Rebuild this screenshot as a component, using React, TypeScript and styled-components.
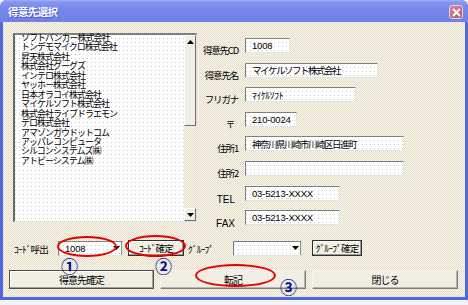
import React from "react";
import styled, { createGlobalStyle } from "styled-components";

const Global = createGlobalStyle`
  html, body { margin: 0; padding: 0; background: #f2f2f2; }
  body { font-family: "Noto Sans CJK JP", "Noto Sans", sans-serif; }
`;

const JP = `"Noto Sans CJK JP", "Noto Sans", sans-serif`;
const LATIN = `"Liberation Sans", "Noto Sans CJK JP", sans-serif`;
const dither = `repeating-conic-gradient(#E4DCC4 0 25%, #FAF8F1 0 50%) 0 0 / 2px 2px`;
const dotted = `
  background-color: #fff;
  background-image: linear-gradient(#fff 3px, transparent 3px), linear-gradient(90deg, #c8c8c8 1px, #fff 1px);
  background-size: 4px 4px;
`;

const Window = styled.div`
  position: relative;
  width: 468px;
  height: 300px;
  box-sizing: border-box;
  display: flex;
  flex-direction: column;
  background: #5366e2;
  border-radius: 7px 7px 0 0;
  overflow: hidden;
`;

const TitleBar = styled.div`
  height: 22px;
  flex: none;
  display: flex;
  align-items: center;
  justify-content: space-between;
  padding: 0 5px 0 8px;
  box-sizing: border-box;
  background: linear-gradient(#a3b0f6 0, #8595ee 2px, #7585e8 45%, #7080e6 100%);
  color: #fff;
`;

const Title = styled.span`
  font-family: ${JP};
  font-size: 10.5px;
  font-weight: bold;
  letter-spacing: -0.6px;
  text-shadow: 1px 1px 0 #4a5ac0;
  margin-top: 1px;
`;

const CloseBox = styled.div`
  width: 14px;
  height: 14px;
  box-sizing: border-box;
  border-radius: 3px;
  border: 1px solid #e8d0e0;
  background: linear-gradient(135deg, #d88898, #b8586c);
  display: flex;
  align-items: center;
  justify-content: center;
  margin-top: 2px;
`;

const Client = styled.div`
  flex: 1;
  margin: 0 3px 3px 3px;
  background: ${dither};
  display: flex;
  flex-direction: column;
  padding: 11px 0 0 0;
`;

const TopSection = styled.div`
  display: flex;
  padding-left: 10px;
`;

const ListBox = styled.div`
  width: 184px;
  height: 189px;
  box-sizing: border-box;
  border-top: 2px solid #808080;
  border-left: 2px solid #6a6a6a;
  border-right: 1px solid #e0e0e0;
  border-bottom: 1px solid #e0e0e0;
  display: flex;
  ${dotted}
`;

const ListItems = styled.div`
  flex: 1;
  padding: 0 0 0 6px;
  margin-top: -2px;
  font-family: ${JP};
  font-size: 9px;
  line-height: 9.46px;
  letter-spacing: -1px;
  color: #000;
  white-space: nowrap;
`;

const ListItem = styled.div``;

const ScrollBar = styled.div`
  width: 12px;
  display: flex;
  flex-direction: column;
  background: ${dither};
`;

const ScrollButton = styled.div<{ $h: number; $bottom?: boolean }>`
  height: ${(p) => p.$h}px;
  box-sizing: border-box;
  background: #f1eee4;
  border: 1px solid;
  border-color: #fff #707070 #707070 #fff;
  display: flex;
  justify-content: center;
  align-items: ${(p) => (p.$bottom ? "center" : "flex-start")};
  padding-top: ${(p) => (p.$bottom ? 0 : 4)}px;
`;

const ScrollGap = styled.div`
  flex: 1;
`;

const Form = styled.div`
  display: grid;
  grid-template-columns: 40px auto;
  grid-template-rows: repeat(8, 15px);
  column-gap: 7px;
  row-gap: 9.6px;
  padding-top: 5px;
  margin-left: 1px;
  align-content: start;
`;

const Label = styled.div<{ $mr?: number }>`
  font-family: ${JP};
  font-size: 9.5px;
  letter-spacing: -1.2px;
  text-align: right;
  align-self: end;
  margin-bottom: -4px;
  margin-right: ${(p) => p.$mr ?? 0}px;
  white-space: nowrap;
  color: #000;
`;

const LatinLabel = styled(Label)`
  font-family: ${LATIN};
  font-size: 10px;
  letter-spacing: 0;
  margin-right: 3px;
`;

const Field = styled.div<{ $w: number; $latin?: boolean; $half?: boolean }>`
  width: ${(p) => p.$w}px;
  height: 15px;
  box-sizing: border-box;
  border: 1px solid;
  border-color: #7f7f7f #e4e4e4 #e4e4e4 #7f7f7f;
  ${dotted}
  padding-left: 6px;
  display: flex;
  align-items: center;
  font-family: ${(p) => (p.$latin ? LATIN : JP)};
  font-size: 9.5px;
  letter-spacing: ${(p) => (p.$latin ? "-0.2px" : p.$half ? "-0.3px" : "-1.5px")};
  white-space: nowrap;
  overflow: hidden;
  color: #000;
`;

const ControlRow = styled.div`
  display: flex;
  align-items: center;
  margin-top: 15px;
  padding-left: 11px;
  height: 16px;
`;

const RowLabel = styled.div<{ $w: number; $pad?: number }>`
  width: ${(p) => p.$w}px;
  padding-left: ${(p) => p.$pad ?? 0}px;
  box-sizing: border-box;
  font-family: ${JP};
  font-size: 9.5px;
  letter-spacing: -0.8px;
  white-space: nowrap;
  color: #000;
  margin-top: 1px;
`;

const Combo = styled.div<{ $w: number }>`
  width: ${(p) => p.$w}px;
  height: 15px;
  box-sizing: border-box;
  border: 1px solid;
  border-color: #7f7f7f #e4e4e4 #e4e4e4 #7f7f7f;
  ${dotted}
  display: flex;
  align-items: stretch;
`;

const ComboText = styled.div`
  flex: 1;
  padding-left: 6px;
  display: flex;
  align-items: center;
  font-family: ${LATIN};
  font-size: 9.5px;
  letter-spacing: -0.2px;
  color: #000;
`;

const ComboArrow = styled.div`
  width: 9px;
  display: flex;
  align-items: center;
  justify-content: center;
  border-right: 1px solid #909090;
`;

const SmallButton = styled.button<{ $w: number; $ml: number }>`
  width: ${(p) => p.$w}px;
  height: 16px;
  margin: 0 0 0 ${(p) => p.$ml}px;
  padding: 0;
  box-sizing: border-box;
  background: #f1eee4;
  border: 1px solid #303030;
  box-shadow: inset -1px -1px #9a9a9a, inset 1px 1px #fff;
  font-family: ${JP};
  font-size: 9.5px;
  letter-spacing: -0.8px;
  color: #000;
  white-space: nowrap;
`;

const ButtonRow = styled.div`
  display: flex;
  gap: 6px;
  margin-top: 14px;
  padding-left: 6px;
`;

const BigButton = styled.button<{ $w: number; $strong?: boolean }>`
  width: ${(p) => p.$w}px;
  height: 19px;
  margin: 0;
  padding: 0;
  box-sizing: border-box;
  background: #f1eee4;
  border: 1px solid;
  border-color: ${(p) => (p.$strong ? "#505050" : "#f4f4f4 #7c7c7c #7c7c7c #f4f4f4")};
  box-shadow: ${(p) => (p.$strong ? "inset -1px -1px #a0a0a0, inset 1px 1px #fff" : "inset -1px -1px #b4b4b4")};
  font-family: ${JP};
  font-size: 10px;
  letter-spacing: -1px;
  color: #000;
`;

const Ring = styled.div<{ $x: number; $y: number; $w: number; $h: number }>`
  position: absolute;
  left: ${(p) => p.$x}px;
  top: ${(p) => p.$y}px;
  width: ${(p) => p.$w}px;
  height: ${(p) => p.$h}px;
  box-sizing: border-box;
  border: 2px solid #e80000;
  border-radius: 50%;
  pointer-events: none;
`;

const Step = styled.div<{ $x: number; $y: number }>`
  position: absolute;
  left: ${(p) => p.$x}px;
  top: ${(p) => p.$y}px;
  font-family: ${JP};
  font-size: 17px;
  font-weight: bold;
  line-height: 17px;
  color: #00108c;
  pointer-events: none;
`;

const Tri = ({ up }: { up?: boolean }) => (
  <svg width="7" height="4" viewBox="0 0 7 4">
    <polygon points={up ? "0,4 7,4 3.5,0" : "0,0 7,0 3.5,4"} fill="#000" />
  </svg>
);

const companies = [
  "ソフトバンカー株式会社",
  "トンデモマイクロ株式会社",
  "昇天株式会社",
  "株式会社グーグズ",
  "インテロ株式会社",
  "ヤッホー株式会社",
  "日本オラコイ株式会社",
  "マイケルソフト株式会社",
  "株式会社ライブドラエモン",
  "デロ株式会社",
  "アマゾンガウドットコム",
  "アッパレコンピュータ",
  "シルコンシステムズ㈱",
  "アトビーシステム㈱",
];

export default function App() {
  return (
    <>
      <Global />
      <Window>
        <TitleBar>
          <Title>得意先選択</Title>
          <CloseBox>
            <svg width="9" height="9" viewBox="0 0 9 9">
              <path d="M1 1 L8 8 M8 1 L1 8" stroke="#fff" strokeWidth="1.8" />
            </svg>
          </CloseBox>
        </TitleBar>
        <Client>
          <TopSection>
            <ListBox>
              <ListItems>
                {companies.map((c) => (
                  <ListItem key={c}>{c}</ListItem>
                ))}
              </ListItems>
              <ScrollBar>
                <ScrollButton $h={91}>
                  <Tri up />
                </ScrollButton>
                <ScrollGap />
                <ScrollButton $h={13} $bottom>
                  <Tri />
                </ScrollButton>
              </ScrollBar>
            </ListBox>
            <Form>
              <Label>得意先CD</Label>
              <Field $w={45} $latin>1008</Field>
              <Label>得意先名</Label>
              <Field $w={133}>マイケルソフト株式会社</Field>
              <Label>フリガナ</Label>
              <Field $w={111} $half>ﾏｲｹﾙｿﾌﾄ</Field>
              <Label $mr={4}>〒</Label>
              <Field $w={52} $latin>210-0024</Field>
              <Label>住所1</Label>
              <Field $w={159}>神奈川県川崎市川崎区日進町</Field>
              <Label>住所2</Label>
              <Field $w={159} />
              <LatinLabel>TEL</LatinLabel>
              <Field $w={95} $latin>03-5213-XXXX</Field>
              <LatinLabel>FAX</LatinLabel>
              <Field $w={95} $latin>03-5213-XXXX</Field>
            </Form>
          </TopSection>
          <ControlRow>
            <RowLabel $w={44}>ｺｰﾄﾞ呼出</RowLabel>
            <Combo $w={65}>
              <ComboText>1008</ComboText>
              <ComboArrow>
                <Tri />
              </ComboArrow>
            </Combo>
            <SmallButton $w={56} $ml={5}>ｺｰﾄﾞ確定</SmallButton>
            <RowLabel $w={49} $pad={4}>ｸﾞﾙｰﾌﾟ</RowLabel>
            <Combo $w={69}>
              <ComboText />
              <ComboArrow>
                <Tri />
              </ComboArrow>
            </Combo>
            <SmallButton $w={50} $ml={10}>ｸﾞﾙｰﾌﾟ確定</SmallButton>
          </ControlRow>
          <ButtonRow>
            <BigButton $w={145} $strong>得意先確定</BigButton>
            <BigButton $w={146}>転記</BigButton>
            <BigButton $w={146}>閉じる</BigButton>
          </ButtonRow>
        </Client>
        <Ring $x={57} $y={236} $w={60} $h={21} />
        <Ring $x={125} $y={235} $w={61} $h={22} />
        <Ring $x={195} $y={264} $w={81} $h={23} />
        <Step $x={61} $y={257}>①</Step>
        <Step $x={155} $y={257}>②</Step>
        <Step $x={280} $y={278}>③</Step>
      </Window>
    </>
  );
}
